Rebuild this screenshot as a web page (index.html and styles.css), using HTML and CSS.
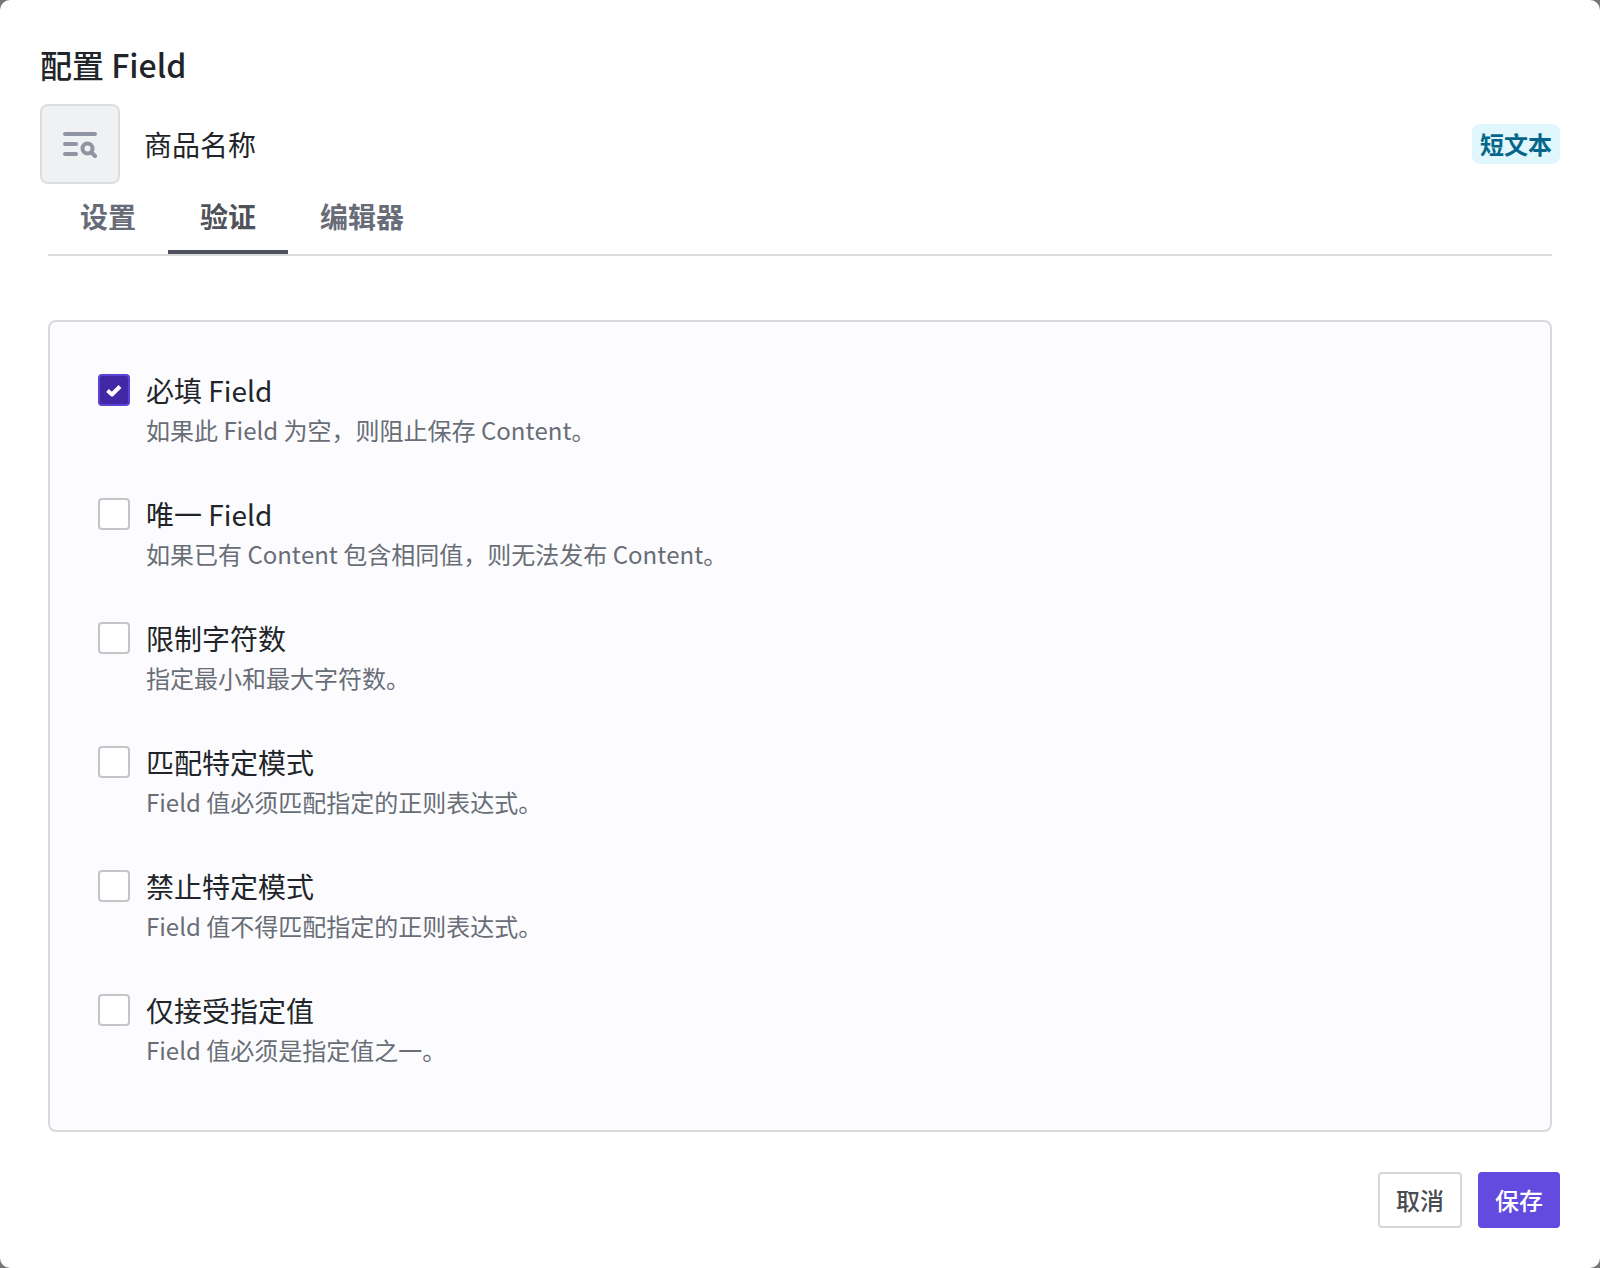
FILE: index.html
```
<!DOCTYPE html>
<html lang="zh-CN">
   <head>
      <title>配置 Field</title>
      <meta charset="UTF-8">
      <meta name="viewport" content="width=device-width, initial-scale=1.0">
      <link rel="stylesheet" href="styles.css">
   </head>
   <body>
      <form class="dialog">
         <h1>配置 Field</h1>
         <div class="field">
            <span class="field-icon">
               <svg width="36" height="28" viewBox="0 0 36 28" fill="none" stroke="#9094a3" stroke-width="4" stroke-linecap="round">
                  <path d="M3 4H33M3 14H14M3 24H14"/>
                  <circle cx="25.500" cy="18.500" r="5"/>
                  <path d="M29.500 22.500L33 26"/>
               </svg>
            </span>
            <span class="field-name">商品名称</span>
            <span class="badge">短文本</span>
         </div>
         <div class="tabs" role="tablist">
            <button type="button" class="tab" role="tab">设置</button>
            <button type="button" class="tab active" role="tab" aria-selected="true">验证</button>
            <button type="button" class="tab" role="tab">编辑器</button>
         </div>
         <div class="panel" role="tabpanel">
            <div class="rule">
               <span class="check">
                  <input type="checkbox" id="required" checked>
                  <svg width="32" height="32" viewBox="0 0 32 32" fill="none" stroke="#fff" stroke-width="4"><path d="M9.500 16.500L14 20.500L22 12.500" stroke-linejoin="round"/></svg>
               </span>
               <div>
                  <label for="required">必填 Field</label>
                  <p>如果此 Field 为空，则阻止保存 Content。</p>
               </div>
            </div>
            <div class="rule">
               <span class="check"><input type="checkbox" id="unique"></span>
               <div>
                  <label for="unique">唯一 Field</label>
                  <p>如果已有 Content 包含相同值，则无法发布 Content。</p>
               </div>
            </div>
            <div class="rule">
               <span class="check"><input type="checkbox" id="length"></span>
               <div>
                  <label for="length">限制字符数</label>
                  <p>指定最小和最大字符数。</p>
               </div>
            </div>
            <div class="rule">
               <span class="check"><input type="checkbox" id="match"></span>
               <div>
                  <label for="match">匹配特定模式</label>
                  <p>Field 值必须匹配指定的正则表达式。</p>
               </div>
            </div>
            <div class="rule">
               <span class="check"><input type="checkbox" id="prohibit"></span>
               <div>
                  <label for="prohibit">禁止特定模式</label>
                  <p>Field 值不得匹配指定的正则表达式。</p>
               </div>
            </div>
            <div class="rule">
               <span class="check"><input type="checkbox" id="values"></span>
               <div>
                  <label for="values">仅接受指定值</label>
                  <p>Field 值必须是指定值之一。</p>
               </div>
            </div>
         </div>
         <div class="actions">
            <button type="button" class="btn">取消</button>
            <button type="submit" class="btn primary">保存</button>
         </div>
      </form>
   </body>
</html>
```

FILE: styles.css
```
*
{ box-sizing:border-box;}
body
{ margin:0;
  background-color:#757575;
  color:#212529;
  font-family:"Noto Sans CJK SC", sans-serif;
  font-size:28px;
  font-kerning:none;
  line-height:40px;}
button
{ font-family:inherit;
  cursor:pointer;}
.dialog
{ min-height:100vh;
  padding:44px 40px 40px;
  border-radius:10px;
  background-color:#fff;}
h1
{ margin:0 0 20px;
  font-size:32px;
  font-weight:500;}
.field
{ display:flex;
  align-items:center;}
.field-icon
{ display:flex;
  align-items:center;
  justify-content:center;
  width:80px;
  height:80px;
  border:2px solid #dcdddf;
  border-radius:8px;
  background-color:#eff1f3;}
.field-name
{ margin-left:24px;}
.badge
{ margin-left:auto;
  padding:0 8px;
  border-radius:8px;
  background-color:#e0f7fd;
  color:#06668a;
  font-size:24px;
  font-weight:bold;}
.tabs
{ display:flex;
  margin:0 8px 64px;
  border-bottom:2px solid #dadbdd;}
.tab
{ height:70px;
  padding:0 32px 2px;
  border:none;
  border-bottom:4px solid transparent;
  background:none;
  color:#686c78;
  font-size:28px;
  font-weight:bold;}
.tab.active
{ border-color:#50525f;
  color:#50525a;}
.panel
{ display:grid;
  gap:44px;
  margin:0 8px 40px;
  padding:48px 48px 60px;
  border:2px solid #d9dadc;
  border-radius:8px;
  background-color:#fcfcfe;}
.rule
{ display:flex;
  gap:16px;}
.rule label
{ display:block;}
.rule p
{ margin:0;
  color:#686d76;
  font-size:24px;}
.check
{ display:grid;
  align-content:start;
  padding-top:4px;}
.check input, .check svg
{ grid-area:1 / 1;}
.check svg
{ pointer-events:none;
  visibility:hidden;}
.check input
{ appearance:none;
  width:32px;
  height:32px;
  margin:0;
  border:2px solid #c4c5c8;
  border-radius:4px;
  background-color:#fff;}
.check input:checked
{ border-color:#5b43d6;
  background-color:#4328a5;}
.check input:checked + svg
{ visibility:visible;}
.actions
{ display:flex;
  justify-content:flex-end;
  gap:16px;}
.btn
{ height:56px;
  padding:0 16px 2px;
  border:2px solid #d6d7d9;
  border-radius:4px;
  background-color:#fff;
  color:#494d52;
  font-size:24px;
  font-weight:500;}
.btn.primary
{ padding:0 17px 2px;
  border:none;
  background-color:#634be0;
  color:#fff;}
```
